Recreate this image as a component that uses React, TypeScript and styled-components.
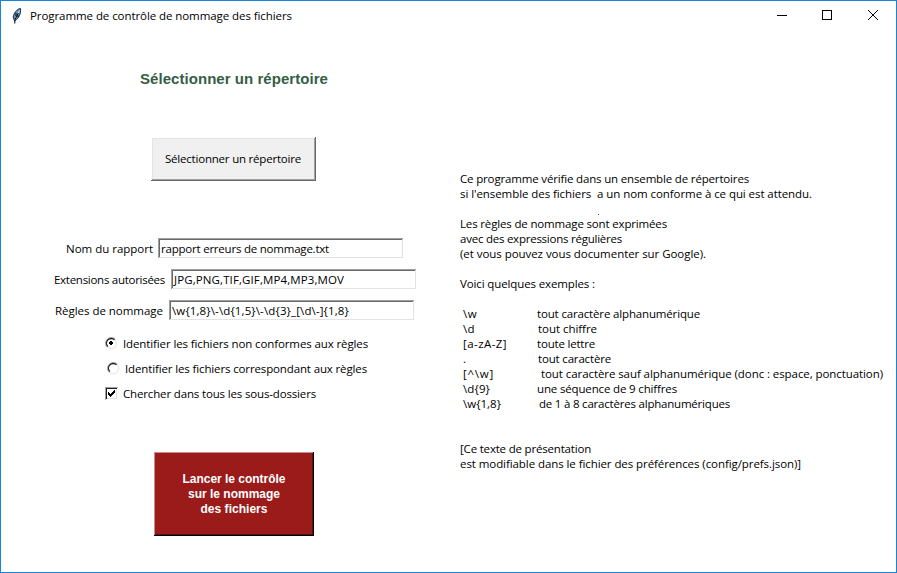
import React, { useLayoutEffect, useRef, useState } from "react";
import styled, { createGlobalStyle } from "styled-components";

const GlobalStyle = createGlobalStyle`
  * { box-sizing: border-box; }
  body { margin: 0; background: #fff; }
`;

const Window = styled.div`
  width: 897px;
  height: 573px;
  border: 1px solid #1883d7;
  background: #fff;
  color: #000;
  font: 11.5px/15px "Open Sans", "Noto Sans", sans-serif;
  overflow: hidden;
`;

const TitleBar = styled.header`
  display: flex;
  align-items: center;
  height: 29px;
  padding-left: 8px;
`;

const Feather = styled.svg`
  width: 16px;
  height: 16px;
  margin-right: 5px;
`;

const WindowControls = styled.div`
  display: flex;
  margin-left: auto;
`;

const ControlIcon = styled.svg`
  width: 46px;
  height: 29px;
`;

const Content = styled.main`
  display: grid;
  grid-template-columns: 458px 1fr;
`;

const Form = styled.section`
  display: flex;
  flex-direction: column;
  align-items: flex-start;
`;

const Heading = styled.h1`
  margin: 40px 0 0 139px;
  font: bold 15px/18px "Liberation Sans", Arial, sans-serif;
  color: #355e45;
`;

const PickButton = styled.button`
  display: flex;
  align-items: center;
  justify-content: center;
  width: 165px;
  height: 44px;
  margin: 49px 0 57px 150px;
  padding: 0 1px 1px 0;
  border: 0;
  background: #f0f0f0;
  box-shadow: inset -1px -1px #696969, inset 1px 1px #fff, inset -2px -2px #a0a0a0, inset 2px 2px #e3e3e3;
  color: #000;
  font: inherit;
`;

const FieldRow = styled.label<{ $indent: number; $gap: number }>`
  display: flex;
  align-items: center;
  gap: ${(p) => p.$gap}px;
  height: 21px;
  margin: 0 0 10px ${(p) => p.$indent}px;
`;

const Entry = styled.div`
  display: flex;
  align-items: center;
  width: 246px;
  height: 21px;
  padding-left: 3px;
  box-shadow: inset -1px -1px #fff, inset 1px 1px #a0a0a0, inset -2px -2px #e3e3e3, inset 2px 2px #696969;
`;

const Choices = styled.div`
  display: flex;
  flex-direction: column;
`;

const Choice = styled.label<{ $indent: number; $gap: number }>`
  display: flex;
  align-items: center;
  gap: ${(p) => p.$gap}px;
  height: 25px;
  margin-left: ${(p) => p.$indent}px;
`;

const Indicator = styled.svg`
  width: 13px;
  height: 13px;
`;

const RunButton = styled.button`
  display: flex;
  flex-direction: column;
  align-items: center;
  justify-content: center;
  width: 160px;
  height: 84px;
  margin: 46px 0 0 153px;
  padding: 0;
  border: 0;
  background: #9b1a1a;
  box-shadow: inset -1px -1px #000, inset 1px 1px #cd8c8c, inset -2px -2px #5d1010;
  color: #fff;
  font: bold 12px/15px "Liberation Sans", Arial, sans-serif;
`;

const Help = styled.section`
  padding: 141px 0 0 1px;
`;

const Line = styled.div<{ $indent?: number }>`
  display: flex;
  height: 15px;
  padding-left: ${(p) => p.$indent ?? 0}px;
`;

const StrayDot = styled.i`
  width: 1px;
  height: 1px;
  margin: 13px 0 0 138px;
  background: #555;
`;

const Pattern = styled.span<{ $width: number }>`
  flex: none;
  width: ${(p) => p.$width}px;
`;

const FittedSpan = styled.span`
  display: block;
  width: max-content;
  flex: none;
  white-space: pre;
`;

/* Spreads or tightens letters so that the text takes the given advance width. */
function Fitted({ width, children }: { width: number; children: string }) {
  const ref = useRef<HTMLSpanElement>(null);
  const [spacing, setSpacing] = useState(0);
  useLayoutEffect(() => {
    const natural = ref.current!.getBoundingClientRect().width;
    setSpacing((width - natural) / children.length);
  }, [width, children]);
  return (
    <FittedSpan ref={ref} style={{ letterSpacing: `${spacing}px` }}>
      {children}
    </FittedSpan>
  );
}

const fields = [
  { label: "Nom du rapport", indent: 65, width: 87, gap: 5, value: "rapport erreurs de nommage.txt", valueWidth: 168 },
  { label: "Extensions autorisées", indent: 53, width: 111, gap: 6, value: "JPG,PNG,TIF,GIF,MP4,MP3,MOV", valueWidth: 170 },
  { label: "Règles de nommage", indent: 54, width: 108, gap: 6, value: "\\w{1,8}\\-\\d{1,5}\\-\\d{3}_[\\d\\-]{1,8}", valueWidth: 177 },
];

const examples = [
  { pattern: "\\w", patternWidth: 14, text: "tout caractère alphanumérique", x: 74, width: 163 },
  { pattern: "\\d", patternWidth: 12, text: "tout chiffre", x: 75, width: 59 },
  { pattern: "[a-zA-Z]", patternWidth: 44, text: "toute lettre", x: 74, width: 58 },
  { pattern: ".", patternWidth: 3, text: "tout caractère", x: 75, width: 73 },
  { pattern: "[^\\w]", patternWidth: 31, text: "tout caractère sauf alphanumérique (donc : espace, ponctuation)", x: 78, width: 342 },
  { pattern: "\\d{9}", patternWidth: 27, text: "une séquence de 9 chiffres", x: 74, width: 140 },
  { pattern: "\\w{1,8}", patternWidth: 38, text: "de 1 à 8 caractères alphanumériques", x: 76, width: 191 },
];

function Radio({ checked }: { checked?: boolean }) {
  return (
    <Indicator viewBox="0 0 13 13" fill="none">
      <path d="M2.2 10.3A5.5 5.5 0 0 1 10.3 2.2" stroke="#a0a0a0" />
      <path d="M2.9 9.6A4.5 4.5 0 0 1 9.6 2.9" stroke="#222" strokeWidth="1.3" />
      <path d="M10.2 2.8A5.2 5.2 0 0 1 2.8 10.2" stroke="#e3e3e3" />
      {checked && <path d="M5 4h2v1h1v2h-1v1h-2v-1h-1v-2h1z" fill="#000" />}
    </Indicator>
  );
}

function Check() {
  return (
    <Indicator viewBox="0 0 13 13" shapeRendering="crispEdges">
      <path d="M0 0h13v1H1v12H0z" fill="#a0a0a0" />
      <path d="M1 1h11v1H2v10H1z" fill="#222" />
      <path d="M11 2h1v10H2v-1h9z" fill="#e3e3e3" />
      <path d="M3 5h1v1h1v1h1v-1h1v-1h1v-1h1v-1h1v3h-1v1h-1v1h-1v1h-1v1h-1v-1h-1v-1h-1z" fill="#000" />
    </Indicator>
  );
}

export default function App() {
  return (
    <Window>
      <GlobalStyle />
      <TitleBar>
        <Feather viewBox="0 0 16 16">
          <path d="M11.5 .5C7.8 1 4.6 5.3 4.2 9l1 3 1 .6c3.5-2.2 6-7.1 5.3-12.1z" fill="#5e92cc" stroke="#222b38" />
          <path d="M10.5 2.5L6 11.5" stroke="#dce9f8" strokeWidth="1" />
          <path d="M9.3 5L5.8 12v3.5M7 5v3M9 7v2" stroke="#000" fill="none" />
        </Feather>
        <Fitted width={262}>Programme de contrôle de nommage des fichiers</Fitted>
        <WindowControls>
          <ControlIcon viewBox="0 0 46 29" shapeRendering="crispEdges">
            <path d="M19 14h10v1H19z" />
          </ControlIcon>
          <ControlIcon viewBox="0 0 46 29" shapeRendering="crispEdges">
            <path d="M18.5 9.5h9v9h-9z" fill="none" stroke="#000" />
          </ControlIcon>
          <ControlIcon viewBox="0 0 46 29">
            <path d="M18 9l10 10M28 9L18 19" stroke="#000" />
          </ControlIcon>
        </WindowControls>
      </TitleBar>
      <Content>
        <Form>
          <Heading><Fitted width={188}>Sélectionner un répertoire</Fitted></Heading>
          <PickButton><Fitted width={136}>Sélectionner un répertoire</Fitted></PickButton>
          {fields.map((f) => (
            <FieldRow key={f.label} $indent={f.indent} $gap={f.gap}>
              <Fitted width={f.width}>{f.label}</Fitted>
              <Entry><Fitted width={f.valueWidth}>{f.value}</Fitted></Entry>
            </FieldRow>
          ))}
          <Choices>
            <Choice $indent={104} $gap={5}>
              <Radio checked />
              <Fitted width={245}>Identifier les fichiers non conformes aux règles</Fitted>
            </Choice>
            <Choice $indent={106} $gap={5}>
              <Radio />
              <Fitted width={242}>Identifier les fichiers correspondant aux règles</Fitted>
            </Choice>
            <Choice $indent={104} $gap={5}>
              <Check />
              <Fitted width={193}>Chercher dans tous les sous-dossiers</Fitted>
            </Choice>
          </Choices>
          <RunButton>
            <Fitted width={103}>Lancer le contrôle</Fitted>
            <Fitted width={92}>sur le nommage</Fitted>
            <Fitted width={67}>des fichiers</Fitted>
          </RunButton>
        </Form>
        <Help>
          <Line><Fitted width={289}>Ce programme vérifie dans un ensemble de répertoires</Fitted></Line>
          <Line><Fitted width={352}>{"si l'ensemble des fichiers  a un nom conforme à ce qui est attendu."}</Fitted></Line>
          <Line><StrayDot /></Line>
          <Line><Fitted width={207}>Les règles de nommage sont exprimées</Fitted></Line>
          <Line><Fitted width={162}>avec des expressions régulières</Fitted></Line>
          <Line><Fitted width={246}>(et vous pouvez vous documenter sur Google).</Fitted></Line>
          <Line />
          <Line><Fitted width={135}>Voici quelques exemples :</Fitted></Line>
          <Line />
          {examples.map((e) => (
            <Line key={e.pattern} $indent={3}>
              <Pattern $width={e.x}><Fitted width={e.patternWidth}>{e.pattern}</Fitted></Pattern>
              <Fitted width={e.width}>{e.text}</Fitted>
            </Line>
          ))}
          <Line />
          <Line />
          <Line><Fitted width={131}>[Ce texte de présentation</Fitted></Line>
          <Line><Fitted width={341}>est modifiable dans le fichier des préférences (config/prefs.json)]</Fitted></Line>
        </Help>
      </Content>
    </Window>
  );
}
